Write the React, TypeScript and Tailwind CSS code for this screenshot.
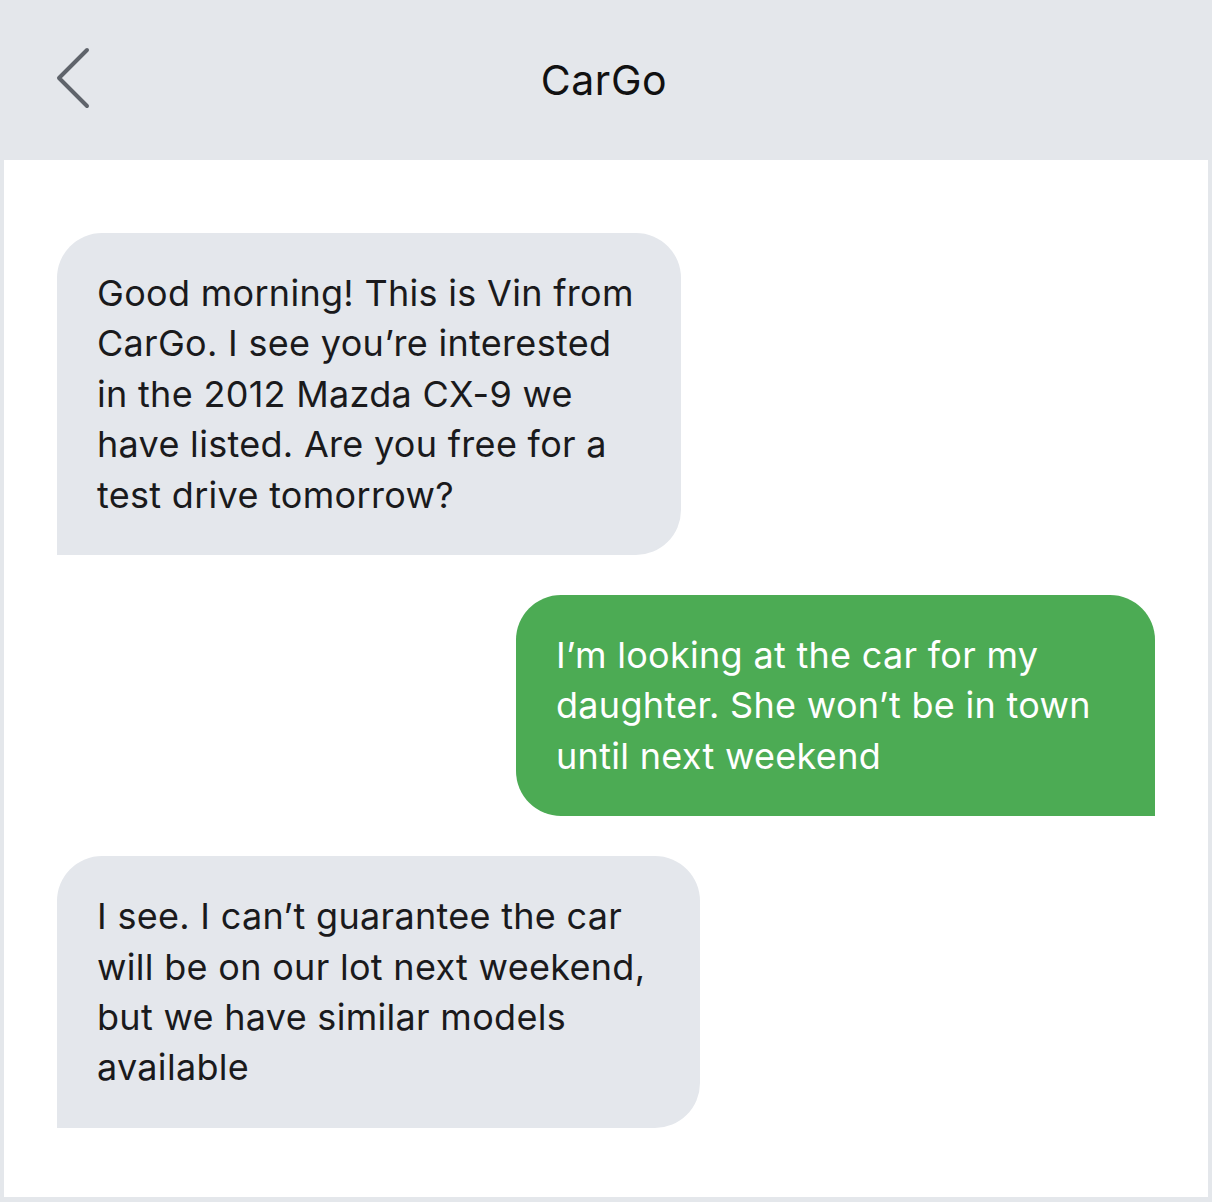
import React from "react";

export default function App() {
  return (
    <div
      className="w-[1212px] h-[1202px] bg-[#e4e7eb] flex flex-col"
      style={{ fontFamily: "Inter, 'Noto Sans', sans-serif" }}
    >
      <header className="h-[160px] shrink-0 relative flex items-center justify-center">
        <svg
          className="absolute left-[54px] top-[45px]"
          width="38"
          height="66"
          viewBox="0 0 38 66"
          fill="none"
        >
          <path
            d="M33 5 L5 33 L33 61"
            stroke="#5f646b"
            strokeWidth="4"
            strokeLinecap="round"
            strokeLinejoin="round"
          />
        </svg>
        <h1 className="text-[41px] leading-none text-[#111] tracking-[0.6px] pr-[4px]">CarGo</h1>
      </header>
      <main className="mx-[4px] h-[1037px] bg-white flex flex-col gap-[40px] pt-[73px] px-[53px]">
        <div className="self-start w-[624px] bg-[#e4e7ec] rounded-[45px] rounded-bl-none px-[40px] py-[35px] text-[36px] leading-[1.4] tracking-[0.3px] text-[#1a1a1c]">
          Good morning! This is Vin from CarGo. I see you’re interested in the 2012 Mazda CX-9 we have listed. Are you free for a test drive tomorrow?
        </div>
        <div className="self-end w-[639px] bg-[#4cab54] rounded-[45px] rounded-br-none px-[40px] py-[35px] text-[36px] leading-[1.4] tracking-[0.3px] text-white">
          I’m looking at the car for my daughter. She won’t be in town until next weekend
        </div>
        <div className="self-start w-[643px] bg-[#e4e7ec] rounded-[45px] rounded-bl-none px-[40px] py-[35px] text-[36px] leading-[1.4] tracking-[0.3px] text-[#1a1a1c]">
          I see. I can’t guarantee the car will be on our lot next weekend, but we have similar models available
        </div>
      </main>
    </div>
  );
}
